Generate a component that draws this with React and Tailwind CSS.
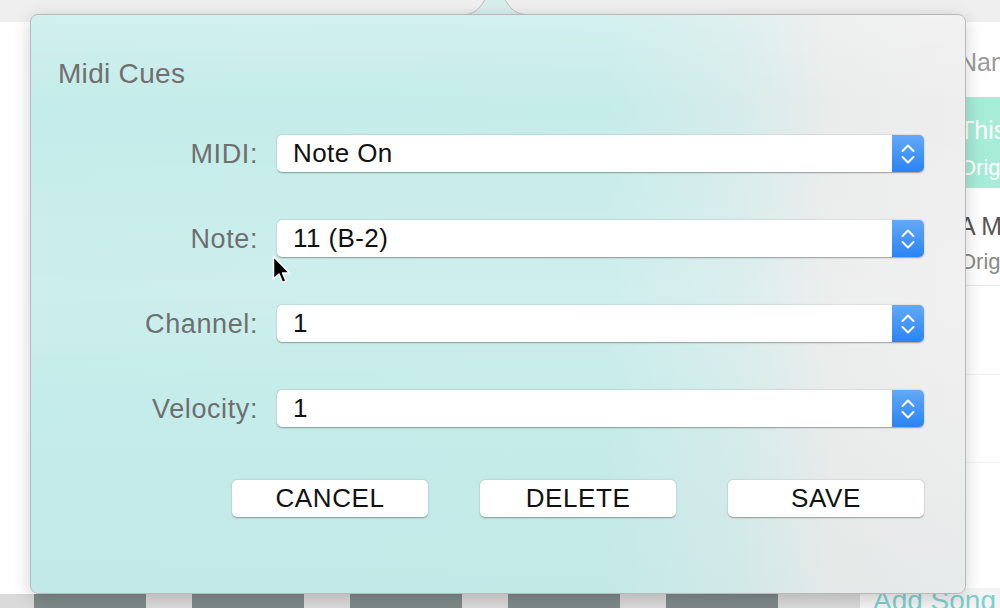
import React from "react";

const font = { fontFamily: '"Liberation Sans", Arial, sans-serif' };

function Stepper() {
  return (
    <div className="w-[32px] h-full flex items-center justify-center rounded-r-[5px] bg-[linear-gradient(180deg,#63a9f7_0%,#2a84f2_100%)]">
      <svg width="16" height="26" viewBox="0 0 16 26" fill="none">
        <path d="M2.5 10 L8 4.5 L13.5 10" stroke="white" strokeWidth="2" strokeLinecap="round" strokeLinejoin="round" />
        <path d="M2.5 16 L8 21.5 L13.5 16" stroke="white" strokeWidth="2" strokeLinecap="round" strokeLinejoin="round" />
      </svg>
    </div>
  );
}

function SelectRow({ label, value }) {
  return (
    <div className="flex items-center gap-[19px]">
      <div className="w-[200px] pt-[2px] text-right text-[27px] tracking-[0.6px] leading-none text-[#6f6f6f]">{label}</div>
      <div className="flex-1 h-[37px] flex items-stretch bg-white rounded-[5px] shadow-[0_0.5px_1.5px_rgba(0,0,0,0.35)]">
        <div className="flex-1 flex items-center pl-[16px] text-[26px] tracking-[0.4px] text-[#111]">{value}</div>
        <Stepper />
      </div>
    </div>
  );
}

function Button({ children }) {
  return (
    <button className="w-[196px] h-[37px] bg-white rounded-[5px] shadow-[0_0.5px_1.5px_rgba(0,0,0,0.35)] text-[26px] tracking-[0.6px] text-[#111] flex items-center justify-center">
      {children}
    </button>
  );
}

export default function App() {
  return (
    <div className="relative w-[1000px] h-[608px] overflow-hidden bg-white" style={font}>
      {/* page behind the popover */}
      <div className="flex flex-col h-full">
        <div className="h-[22px] bg-[#efefef]" />
        <div className="flex-1 flex">
          <div className="flex-1" />
          <div className="w-[45px] flex flex-col overflow-hidden whitespace-nowrap">
            <div className="h-[75px] pt-[28px] pl-[4px] text-[25px] text-[#9a9a9a] leading-none">Name</div>
            <div className="h-[91px] bg-[#a6ecd6] pl-[4px] pt-[21px] text-[25px] leading-none text-white flex flex-col gap-[14px]">
              <span>This</span>
              <span className="text-[22px]">Original</span>
            </div>
            <div className="h-[98px] border-b border-[#e6e6e6] pl-[4px] pt-[26px] leading-none flex flex-col gap-[12px]">
              <span className="text-[25px] text-[#555]">A Mix</span>
              <span className="text-[22px] text-[#8a8a8a]">Original</span>
            </div>
            <div className="h-[89px] border-b border-[#f0f0f0]" />
            <div className="h-[88px] border-b border-[#f3f3f3]" />
          </div>
        </div>
        <div className="h-[20px] flex items-end">
          <div className="flex-1 h-[14px] flex bg-[#dadada] pl-[34px] gap-[46px]">
            <div className="w-[112px] bg-[#7e8a89]" />
            <div className="w-[112px] bg-[#7e8a89]" />
            <div className="w-[112px] bg-[#7e8a89]" />
            <div className="w-[112px] bg-[#7e8a89]" />
            <div className="w-[112px] bg-[#7e8a89]" />
          </div>
          <div className="w-[140px] h-[20px] overflow-hidden bg-[#f4f4f4]">
            <div className="pl-[13px] whitespace-nowrap text-[28px] leading-[26px] text-[#7fd0cd]">Add Song</div>
          </div>
        </div>
      </div>

      {/* popover arrow */}
      <svg className="absolute left-[455px] top-[-12px]" width="80" height="28" viewBox="0 0 80 28">
        <path d="M2 27 C18 27 22 24 30 12 C36 3 44 3 50 12 C58 24 62 27 78 27 Z" fill="#d8efed" stroke="#bdbdbd" strokeWidth="1" />
      </svg>

      {/* popover */}
      <div className="absolute left-[30px] top-[14px] w-[936px] h-[580px] rounded-[8px] border border-[#b9b9b9] shadow-[0_4px_18px_rgba(0,0,0,0.18)] overflow-hidden bg-[linear-gradient(90deg,#c4ecea_0%,#c6ecea_62%,#d6eceb_76%,#eaeceb_86%,#eeeeee_100%)]">
        <div className="absolute inset-0 bg-[linear-gradient(180deg,rgba(255,255,255,0.22)_0%,rgba(255,255,255,0)_16%,rgba(255,255,255,0.14)_48%,rgba(255,255,255,0)_68%,rgba(170,205,205,0.1)_100%)]" />
        <div className="relative flex flex-col pl-[27px] pr-[41px] pt-[44px]">
          <div className="text-[28px] tracking-[0.3px] leading-[30px] text-[#707070]">Midi Cues</div>
          <div className="mt-[46px] flex flex-col gap-[48px]">
            <SelectRow label="MIDI:" value="Note On" />
            <SelectRow label="Note:" value="11 (B-2)" />
            <SelectRow label="Channel:" value="1" />
            <SelectRow label="Velocity:" value="1" />
          </div>
          <div className="mt-[53px] flex justify-end gap-[52px]">
            <Button>CANCEL</Button>
            <Button>DELETE</Button>
            <Button>SAVE</Button>
          </div>
        </div>
      </div>

      {/* mouse cursor */}
      <svg className="absolute left-[272px] top-[255px]" width="20" height="32" viewBox="0 0 20 32">
        <path d="M1.5 1.5 L1.5 24 L7 19 L10.5 27.5 L14 26 L10.5 18 L17.5 18 Z" fill="#000" stroke="#fff" strokeWidth="1.5" strokeLinejoin="round" />
      </svg>
    </div>
  );
}
